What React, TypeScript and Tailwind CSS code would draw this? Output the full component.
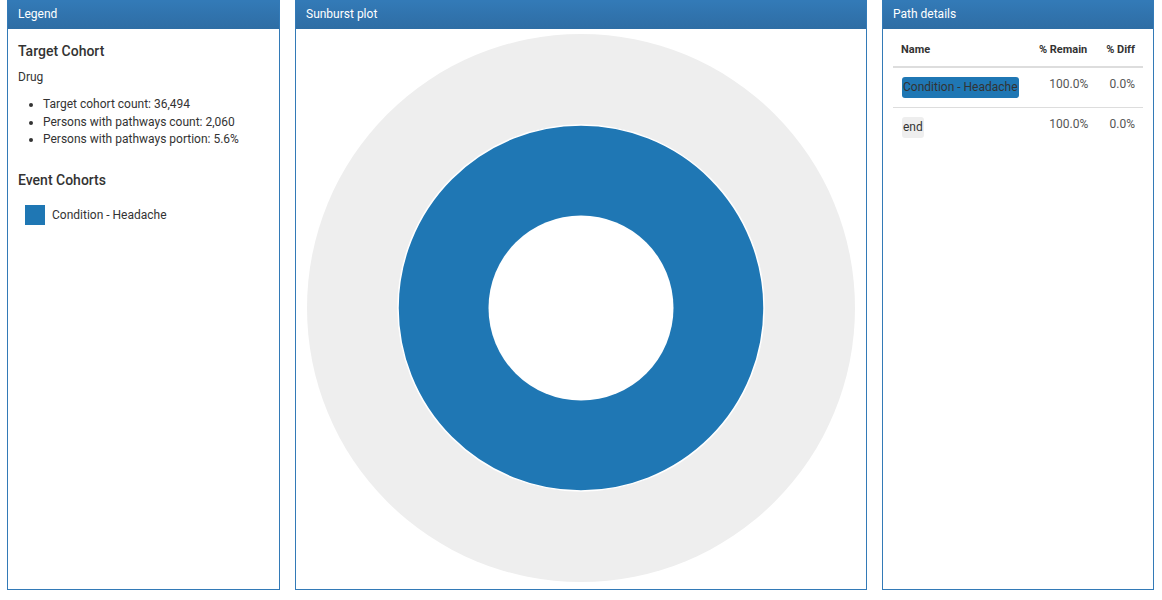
import React from "react";

const BLUE = "#1f77b4";

type PathRow = { name: string; remain: string; diff: string; color: string };

const rows: PathRow[] = [
  { name: "Condition - Headache", remain: "100.0%", diff: "0.0%", color: BLUE },
  { name: "end", remain: "100.0%", diff: "0.0%", color: "#eeeeee" },
];

function Panel({
  title,
  className,
  children,
}: {
  title: string;
  className?: string;
  children: React.ReactNode;
}) {
  return (
    <div
      className={`flex flex-col h-[590px] border border-[#337ab7] bg-white ${className || ""}`}
    >
      <div className="h-[28px] shrink-0 bg-linear-to-b from-[#337ab7] to-[#2e6da4] px-[10px] text-[12px] leading-[26px] text-white">
        {title}
      </div>
      <div className="flex-1 min-h-0">{children}</div>
    </div>
  );
}

function Sunburst() {
  // center of the plot area, radii read off the rings
  const cx = 285;
  const cy = 279;
  return (
    <svg width="570" height="560" viewBox="0 0 570 560" className="block">
      <circle cx={cx} cy={cy} r={274} fill="#eeeeee" />
      <circle cx={cx} cy={cy} r={183} fill={BLUE} stroke="#ffffff" strokeWidth={1.5} />
      <circle cx={cx} cy={cy} r={92.5} fill="#ffffff" />
    </svg>
  );
}

export default function App() {
  return (
    <div
      className="w-[1162px] h-[600px] bg-white text-[#333] flex gap-[15px] pl-[7px] pr-[8px]"
      style={{ fontFamily: "Roboto, 'Liberation Sans', sans-serif" }}
    >
      {/* Legend */}
      <Panel title="Legend" className="w-[273px]">
        <div className="px-[10px] pt-[11px]">
          <h4 className="text-[14px] font-medium leading-[22px]">Target Cohort</h4>
          <div className="mt-[7px] text-[12px] leading-[17px]">Drug</div>
          <ul className="mt-[10px] list-disc pl-[25px] text-[12px] leading-[17.5px]">
            <li>Target cohort count: 36,494</li>
            <li>Persons with pathways count: 2,060</li>
            <li>Persons with pathways portion: 5.6%</li>
          </ul>
          <h4 className="mt-[20px] text-[14px] font-medium leading-[22px]">Event Cohorts</h4>
          <div className="mt-[14px] flex items-center gap-[7px] pl-[7px] text-[12px]">
            <span className="w-[20px] h-[20px] bg-[#1f77b4]" />
            <span>Condition - Headache</span>
          </div>
        </div>
      </Panel>

      {/* Sunburst */}
      <Panel title="Sunburst plot" className="w-[572px]">
        <Sunburst />
      </Panel>

      {/* Path details */}
      <Panel title="Path details" className="w-[272px]">
        <div className="px-[10px] pt-[10px]">
          <table className="w-full border-collapse text-[12px]">
            <thead>
              <tr className="border-b-2 border-[#dddddd]">
                <th className="text-left text-[11px] font-bold leading-[15px] pl-[8px] pt-[3px] pb-[9px]">
                  Name
                </th>
                <th className="text-right text-[11px] font-bold leading-[15px] px-[8px] pt-[3px] pb-[9px]">
                  % Remain
                </th>
                <th className="text-right text-[11px] font-bold leading-[15px] px-[8px] pt-[3px] pb-[9px]">
                  % Diff
                </th>
              </tr>
            </thead>
            <tbody>
              {rows.map((r, i) => (
                <tr
                  key={r.name}
                  className={i < rows.length - 1 ? "border-b border-[#dddddd]" : ""}
                >
                  <td className="align-top pl-[9px] pt-[9px] pb-[9px]">
                    <span
                      className="inline-block rounded-[3px] px-[1px] py-[2px] leading-[17px] text-[#333]"
                      style={{ backgroundColor: r.color }}
                    >
                      {r.name}
                    </span>
                  </td>
                  <td className="align-top text-right pl-[8px] pr-[7px] pt-[8px] leading-[17px] text-[#555]">
                    {r.remain}
                  </td>
                  <td className="align-top text-right px-[8px] pt-[8px] leading-[17px] text-[#555]">
                    {r.diff}
                  </td>
                </tr>
              ))}
            </tbody>
          </table>
        </div>
      </Panel>
    </div>
  );
}
